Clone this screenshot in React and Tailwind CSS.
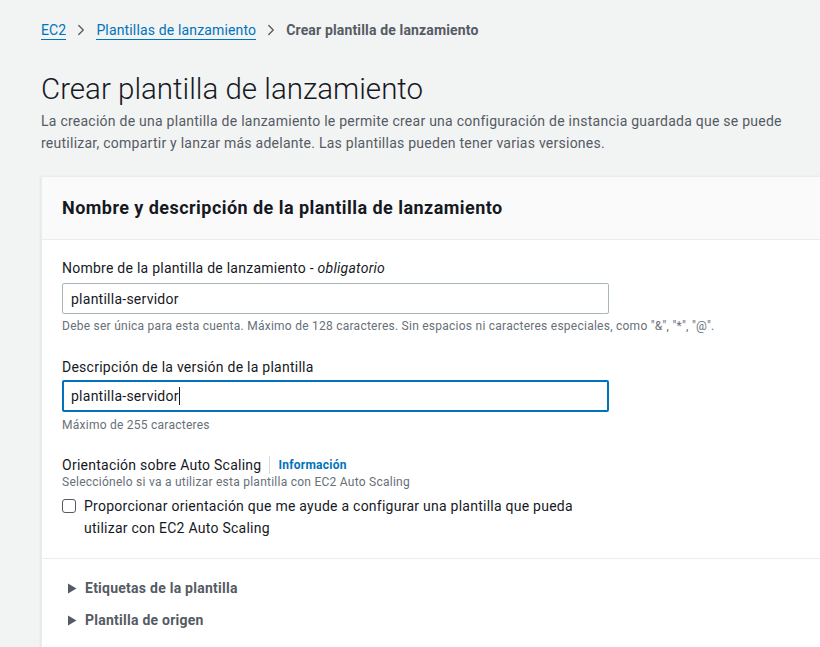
import { ChevronRight } from 'lucide-react';

const font = { fontFamily: 'Roboto, "Noto Sans", sans-serif' };

function Caret() {
  return (
    <svg width="10" height="11" viewBox="0 0 10 11" className="shrink-0">
      <path d="M1 0.5 L9.5 5.5 L1 10.5 Z" fill="#545b64" />
    </svg>
  );
}

export default function App() {
  return (
    <div className="w-[820px] h-[647px] overflow-hidden bg-[#f2f3f3] text-[#16191f] tracking-[0.25px]" style={font}>
      <div className="pl-[41px]">
        <nav className="flex items-center h-[60px] text-sm tracking-[0.15px]">
          <a className="text-[#0073bb] border-b border-[#0073bb] leading-[18px]">EC2</a>
          <ChevronRight className="w-[18px] h-[18px] mx-[6px] text-[#545b64]" strokeWidth={1.75} />
          <a className="text-[#0073bb] border-b border-[#0073bb] leading-[18px]">Plantillas de lanzamiento</a>
          <ChevronRight className="w-[18px] h-[18px] mx-[6px] text-[#545b64]" strokeWidth={1.75} />
          <span className="font-bold text-[#545b64]">Crear plantilla de lanzamiento</span>
        </nav>

        <h1 className="text-[29.5px] font-light leading-[36px] mt-[11px] tracking-normal">Crear plantilla de lanzamiento</h1>
        <p className="text-sm leading-[22px] text-[#545b64] mt-[3px] pr-[20px]">
          La creación de una plantilla de lanzamiento le permite crear una configuración de instancia guardada que se puede
          reutilizar, compartir y lanzar más adelante. Las plantillas pueden tener varias versiones.
        </p>

        <div className="mt-[22px] w-[800px] bg-white border-l border-t border-[#eaeded] shadow-sm">
          <div className="h-[63px] bg-[#fafafa] border-b border-[#eaeded] flex items-center px-5">
            <h2 className="text-lg font-bold tracking-[0.45px]">Nombre y descripción de la plantilla de lanzamiento</h2>
          </div>

          <div className="px-5 pt-[17px] pb-[19px] border-b border-[#eaeded]">
            <div>
              <label className="block text-sm leading-[22px]">
                Nombre de la plantilla de lanzamiento - <i>obligatorio</i>
              </label>
              <div className="mt-[4px] w-[547px] h-[31px] border border-[#aab7b8] rounded-[2px] flex items-center px-[8px] text-sm">
                plantilla-servidor
              </div>
              <p className="text-xs text-[#687078] leading-[18px] mt-[3px]">
                Debe ser única para esta cuenta. Máximo de 128 caracteres. Sin espacios ni caracteres especiales, como "&amp;", "*", "@".
              </p>
            </div>

            <div className="mt-[21px]">
              <label className="block text-sm leading-[22px]">Descripción de la versión de la plantilla</label>
              <div className="mt-[2px] w-[547px] h-[32px] border-2 border-[#0073bb] rounded-[2px] flex items-center px-[7px] text-sm">
                plantilla-servidor<span className="w-px h-[18px] bg-[#16191f]" />
              </div>
              <p className="text-xs text-[#687078] leading-[18px] mt-[4px]">Máximo de 255 caracteres</p>
            </div>

            <div className="mt-[21px]">
              <div className="flex items-center text-sm h-[20px] leading-[20px]">
                <span>Orientación sobre Auto Scaling</span>
                <span className="w-px h-[18px] bg-[#d5dbdb] mx-[8px]" />
                <a className="text-xs font-bold text-[#0073bb]">Información</a>
              </div>
              <p className="text-xs text-[#687078] leading-[14px]">Selecciónelo si va a utilizar esta plantilla con EC2 Auto Scaling</p>
              <div className="flex items-start mt-[6px]">
                <span className="mt-[4px] w-[14px] h-[14px] border border-[#545b64] rounded-[3px] bg-white shrink-0" />
                <span className="ml-[8px] text-sm leading-[22px] w-[510px]">
                  Proporcionar orientación que me ayude a configurar una plantilla que pueda utilizar con EC2 Auto Scaling
                </span>
              </div>
            </div>
          </div>

          <div className="px-5 pt-[18px] pb-[20px] flex flex-col gap-[10px]">
            <div className="flex items-center gap-[8px] h-[22px] pl-[5px]">
              <Caret />
              <span className="text-sm font-bold text-[#545b64]">Etiquetas de la plantilla</span>
            </div>
            <div className="flex items-center gap-[8px] h-[22px] pl-[5px]">
              <Caret />
              <span className="text-sm font-bold text-[#545b64]">Plantilla de origen</span>
            </div>
          </div>
        </div>
      </div>
    </div>
  );
}
